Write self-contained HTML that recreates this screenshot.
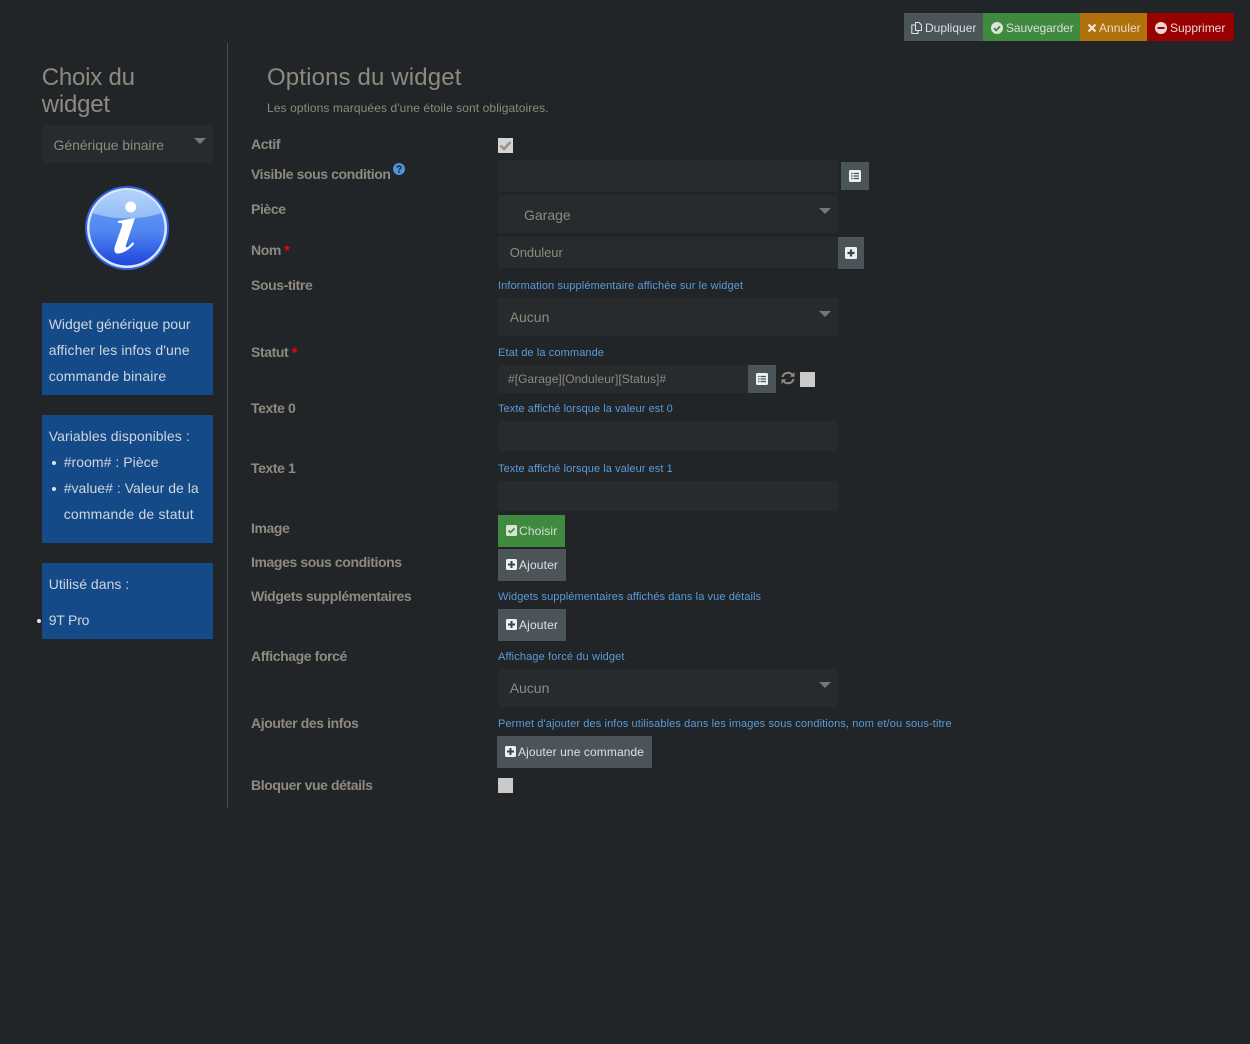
<!DOCTYPE html>
<html lang="fr"><head><meta charset="utf-8"><title>Options du widget</title>
<style>
html,body{margin:0;padding:0;background:#212527;width:1250px;height:1044px;overflow:hidden}
body{position:relative;font-family:"Liberation Sans",sans-serif;color:#8f8a80}
.a{position:absolute}
.t{position:absolute;white-space:nowrap;line-height:18px}
.l{position:absolute;white-space:nowrap;left:251px;font-size:14px;font-weight:bold;line-height:18px;color:#8f8a80;letter-spacing:-.4px}
.l i{color:#f00;font-style:normal}
.h{position:absolute;white-space:nowrap;left:498px;font-size:11px;line-height:14px;color:#5a9bd8;letter-spacing:.115px}
.in{position:absolute;background:#272b2e}
.v{position:absolute;white-space:nowrap;font-size:14px;line-height:18px;color:#8f8a80}
.g{position:absolute;background:#4b5459}
.w{position:absolute;white-space:nowrap;font-size:12px;line-height:16px;color:#dde0e0;letter-spacing:.1px}
.b{position:absolute;left:42px;width:171px;background:#154a88}
.s{position:absolute;white-space:nowrap;font-size:14px;line-height:18px;color:#cfd6de}
.arr{position:absolute;width:0;height:0;border-left:6px solid transparent;border-right:6px solid transparent;border-top:6px solid #777}
.d{position:absolute;width:4px;height:4px;border-radius:50%;background:#dfe4ea}
svg{position:absolute;display:block}
</style></head><body>

<!-- top buttons -->
<div class="g" style="left:904px;top:13px;width:79px;height:28px"></div>
<div class="a" style="left:983px;top:13px;width:97px;height:28px;background:#3f8a3f"></div>
<div class="a" style="left:1080px;top:13px;width:67px;height:28px;background:#b0700b"></div>
<div class="a" style="left:1147px;top:13px;width:87px;height:28px;background:#990000"></div>
<svg style="left:911px;top:22px" width="11" height="12" viewBox="0 0 11 12"><path d="M4.500.5h3.500l2.500 2.500v5.500h-6zM4 3H.8v8.500H7V9" fill="none" stroke="#dde0e0" stroke-width="1.100"/></svg>
<div class="w" style="left:925px;top:20px;letter-spacing:0">Dupliquer</div>
<svg style="left:991px;top:22px" width="12" height="12" viewBox="0 0 12 12"><circle cx="6" cy="6" r="6" fill="#dde5dd"/><path d="M3 6.200l2.200 2.200L9 4.400" fill="none" stroke="#3f8a3f" stroke-width="1.800"/></svg>
<div class="w" style="left:1006px;top:20px;letter-spacing:-.1px;color:#d5e0d5">Sauvegarder</div>
<svg style="left:1087px;top:23px" width="10" height="10" viewBox="0 0 10 10"><path d="M1.500 1.500l7 7M8.500 1.500l-7 7" stroke="#eee6d8" stroke-width="2.200"/></svg>
<div class="w" style="left:1099px;top:20px;color:#e8dcc8;letter-spacing:.05px">Annuler</div>
<svg style="left:1155px;top:22px" width="12" height="12" viewBox="0 0 12 12"><circle cx="6" cy="6" r="6" fill="#ecd8d8"/><rect x="2.500" y="5" width="7" height="2" fill="#990000"/></svg>
<div class="w" style="left:1170px;top:20px;color:#ecd8d8;letter-spacing:0">Supprimer</div>

<!-- left column -->
<div class="t" style="left:41.700px;top:64px;font-size:24px;line-height:28px;letter-spacing:-.2px">Choix du</div>
<div class="t" style="left:41.700px;top:91px;font-size:24px;line-height:28px;letter-spacing:-.2px">widget</div>
<div class="in" style="left:42px;top:125px;width:171px;height:38px"></div>
<div class="v" style="left:53.500px;top:136px;letter-spacing:-.05px">Générique binaire</div>
<div class="arr" style="left:194px;top:138px"></div>

<svg style="left:84px;top:185px" width="86" height="86" viewBox="0 0 86 86">
<defs>
<linearGradient id="g1" x1="0" y1="0" x2="0" y2="1"><stop offset="0" stop-color="#6aa2f4"/><stop offset=".55" stop-color="#4f86f0"/><stop offset="1" stop-color="#1f45dc"/></linearGradient>
<linearGradient id="g2" x1="0" y1="0" x2="0" y2="1"><stop offset="0" stop-color="#b4d3fb"/><stop offset="1" stop-color="#92bcf7"/></linearGradient>
</defs>
<circle cx="43" cy="43" r="42" fill="#2e62dc"/>
<circle cx="43" cy="43" r="40" fill="#dbe6fb"/>
<circle cx="43" cy="43" r="37.500" fill="url(#g1)"/>
<path d="M8.500 28C13 15 27 5.700 43 5.700S73 15 77.500 28C67 31.500 55 33.500 43 33.500S19 31.500 8.500 28z" fill="url(#g2)"/>
<circle cx="46.700" cy="22" r="5.500" fill="#fff"/>
<path d="M34 36L51 33L42 60C41 63 43 63 45 61L49 57L50 59C45 65 38 69 33 68.500C30 68 30 64 31 61L38 41C39 38 37 37.500 34 38Z" fill="#fff"/>
</svg>

<div class="b" style="top:303px;height:92px"></div>
<div class="s" style="left:48.700px;top:315px;letter-spacing:.01px">Widget générique pour</div>
<div class="s" style="left:48.700px;top:341px;letter-spacing:.1px">afficher les infos d'une</div>
<div class="s" style="left:48.700px;top:367px;letter-spacing:.15px">commande binaire</div>

<div class="b" style="top:415px;height:128px"></div>
<div class="s" style="left:48.700px;top:427px;letter-spacing:.09px">Variables disponibles :</div>
<div class="d" style="left:52px;top:461px"></div>
<div class="s" style="left:63.700px;top:453px;letter-spacing:.05px">#room# : Pièce</div>
<div class="d" style="left:52px;top:487px"></div>
<div class="s" style="left:63.700px;top:479px;letter-spacing:.03px">#value# : Valeur de la</div>
<div class="s" style="left:63.700px;top:505px;letter-spacing:.18px">commande de statut</div>

<div class="b" style="top:563px;height:76px"></div>
<div class="s" style="left:48.700px;top:575px;letter-spacing:.03px">Utilisé dans :</div>
<div class="d" style="left:37px;top:619px"></div>
<div class="s" style="left:48.700px;top:611px;letter-spacing:-.2px">9T Pro</div>

<div class="a" style="left:227px;top:43px;width:1px;height:765px;background:#4a4e50"></div>

<!-- right heading -->
<div class="t" style="left:267px;top:64px;font-size:24px;line-height:28px;letter-spacing:.14px">Options du widget</div>
<div class="t" style="left:267px;top:99px;font-size:12px;letter-spacing:.1px">Les options marquées d'une étoile sont obligatoires.</div>

<!-- labels -->
<div class="l" style="top:135px">Actif</div>
<div class="l" style="top:165px">Visible sous condition</div>
<svg style="left:393px;top:163px" width="12" height="12" viewBox="0 0 12 12"><circle cx="6" cy="6" r="6" fill="#4f92dc"/><path d="M4.200 4.600C4.200 3.500 5 3 6 3s1.900.6 1.900 1.600c0 1.400-1.900 1.300-1.900 2.700" fill="none" stroke="#1c2a38" stroke-width="1.400"/><rect x="5.200" y="8" width="1.600" height="1.600" fill="#1c2a38"/></svg>
<div class="l" style="top:200px">Pièce</div>
<div class="l" style="top:241px">Nom <i>*</i></div>
<div class="l" style="top:276px">Sous-titre</div>
<div class="l" style="top:343px">Statut <i>*</i></div>
<div class="l" style="top:399px">Texte 0</div>
<div class="l" style="top:459px">Texte 1</div>
<div class="l" style="top:519px">Image</div>
<div class="l" style="top:553px">Images sous conditions</div>
<div class="l" style="top:587px">Widgets supplémentaires</div>
<div class="l" style="top:647px">Affichage forcé</div>
<div class="l" style="top:714px">Ajouter des infos</div>
<div class="l" style="top:776px">Bloquer vue détails</div>

<!-- Actif -->
<div class="a" style="left:498px;top:138px;width:15px;height:15px;background:#d4d4d4"></div>
<svg style="left:498px;top:138px" width="15" height="15" viewBox="0 0 15 15"><path d="M2.500 7.500l3.500 3.500 6.500-7" fill="none" stroke="#9a9488" stroke-width="2.600"/></svg>

<!-- Visible -->
<div class="in" style="left:498px;top:160px;width:340px;height:32px"></div>
<div class="g" style="left:841px;top:162px;width:28px;height:28px"></div>
<svg style="left:849px;top:170px" width="12" height="12" viewBox="0 0 12 12"><rect width="12" height="12" rx="1.500" fill="#eef0f0"/><path d="M2 3.500h1.500M2 6h1.500M2 8.500h1.500M4.500 3.500H10M4.500 6H10M4.500 8.500H10" stroke="#4b5459" stroke-width="1.300"/></svg>

<!-- Pièce -->
<div class="in" style="left:498px;top:195px;width:340px;height:38px"></div>
<div class="v" style="left:524px;top:206px">Garage</div>
<div class="arr" style="left:819px;top:208px"></div>

<!-- Nom -->
<div class="in" style="left:498px;top:237px;width:340px;height:31px"></div>
<div class="t" style="left:509.700px;top:244px;font-size:13px;letter-spacing:-.05px">Onduleur</div>
<div class="g" style="left:838px;top:237px;width:26px;height:32px"></div>
<svg style="left:845px;top:247px" width="12" height="12" viewBox="0 0 12 12"><rect width="12" height="12" rx="1.500" fill="#eef0f0"/><path d="M6 2.500v7M2.500 6h7" stroke="#3c4448" stroke-width="2.200"/></svg>

<!-- Sous-titre -->
<div class="h" style="top:279px">Information supplémentaire affichée sur le widget</div>
<div class="in" style="left:498px;top:298px;width:340px;height:38px"></div>
<div class="v" style="left:509.700px;top:308px">Aucun</div>
<div class="arr" style="left:819px;top:311px"></div>

<!-- Statut -->
<div class="h" style="top:346px">Etat de la commande</div>
<div class="in" style="left:498px;top:365px;width:250px;height:28px"></div>
<div class="t" style="left:508px;top:370px;font-size:12px;letter-spacing:.05px">#[Garage][Onduleur][Status]#</div>
<div class="g" style="left:748px;top:365px;width:28px;height:28px"></div>
<svg style="left:756px;top:373px" width="12" height="12" viewBox="0 0 12 12"><rect width="12" height="12" rx="1.500" fill="#eef0f0"/><path d="M2 3.500h1.500M2 6h1.500M2 8.500h1.500M4.500 3.500H10M4.500 6H10M4.500 8.500H10" stroke="#4b5459" stroke-width="1.300"/></svg>
<svg style="left:781px;top:371px" width="14" height="14" viewBox="0 0 14 14"><path d="M1.500 6C2 3.500 4.200 1.700 7 1.700c1.700 0 3.200.7 4.200 1.900M12.500 8c-.5 2.500-2.700 4.300-5.500 4.300-1.700 0-3.200-.7-4.200-1.900" fill="none" stroke="#8f8a80" stroke-width="2"/><path d="M13.500 1v4.700H8.800zM.5 13V8.300h4.700z" fill="#8f8a80"/></svg>
<div class="a" style="left:800px;top:372px;width:15px;height:15px;background:#cacaca"></div>

<!-- Texte 0/1 -->
<div class="h" style="top:402px;letter-spacing:.07px">Texte affiché lorsque la valeur est 0</div>
<div class="in" style="left:498px;top:421px;width:340px;height:30px"></div>
<div class="h" style="top:462px;letter-spacing:.07px">Texte affiché lorsque la valeur est 1</div>
<div class="in" style="left:498px;top:481px;width:340px;height:30px"></div>

<!-- Image -->
<div class="a" style="left:498px;top:515px;width:67px;height:32px;background:#3f8a3f"></div>
<svg style="left:506px;top:525px" width="11" height="11" viewBox="0 0 11 11"><rect width="11" height="11" rx="1.500" fill="#d8e4d8"/><path d="M2.500 5.500l2 2 4-4" fill="none" stroke="#3f8a3f" stroke-width="1.600"/></svg>
<div class="w" style="left:519px;top:523px;color:#d5e0d5;letter-spacing:.15px">Choisir</div>

<div class="g" style="left:498px;top:549px;width:68px;height:32px"></div>
<svg style="left:506px;top:559px" width="11" height="11" viewBox="0 0 11 11"><rect width="11" height="11" rx="1.500" fill="#eef0f0"/><path d="M5.500 2v7M2 5.500h7" stroke="#3c4448" stroke-width="2"/></svg>
<div class="w" style="left:519px;top:557px;letter-spacing:.15px">Ajouter</div>

<div class="h" style="top:590px;letter-spacing:.09px">Widgets supplémentaires affichés dans la vue détails</div>
<div class="g" style="left:498px;top:609px;width:68px;height:32px"></div>
<svg style="left:506px;top:619px" width="11" height="11" viewBox="0 0 11 11"><rect width="11" height="11" rx="1.500" fill="#eef0f0"/><path d="M5.500 2v7M2 5.500h7" stroke="#3c4448" stroke-width="2"/></svg>
<div class="w" style="left:519px;top:617px;letter-spacing:.15px">Ajouter</div>

<!-- Affichage -->
<div class="h" style="top:650px;letter-spacing:.13px">Affichage forcé du widget</div>
<div class="in" style="left:498px;top:669px;width:340px;height:38px"></div>
<div class="v" style="left:509.700px;top:679px">Aucun</div>
<div class="arr" style="left:819px;top:682px"></div>

<!-- Infos -->
<div class="h" style="top:717px;letter-spacing:.11px">Permet d'ajouter des infos utilisables dans les images sous conditions, nom et/ou sous-titre</div>
<div class="g" style="left:497px;top:736px;width:155px;height:32px"></div>
<svg style="left:505px;top:746px" width="11" height="11" viewBox="0 0 11 11"><rect width="11" height="11" rx="1.500" fill="#eef0f0"/><path d="M5.500 2v7M2 5.500h7" stroke="#3c4448" stroke-width="2"/></svg>
<div class="w" style="left:518px;top:744px">Ajouter une commande</div>

<!-- Bloquer -->
<div class="a" style="left:498px;top:778px;width:15px;height:15px;background:#cacaca"></div>

</body></html>
